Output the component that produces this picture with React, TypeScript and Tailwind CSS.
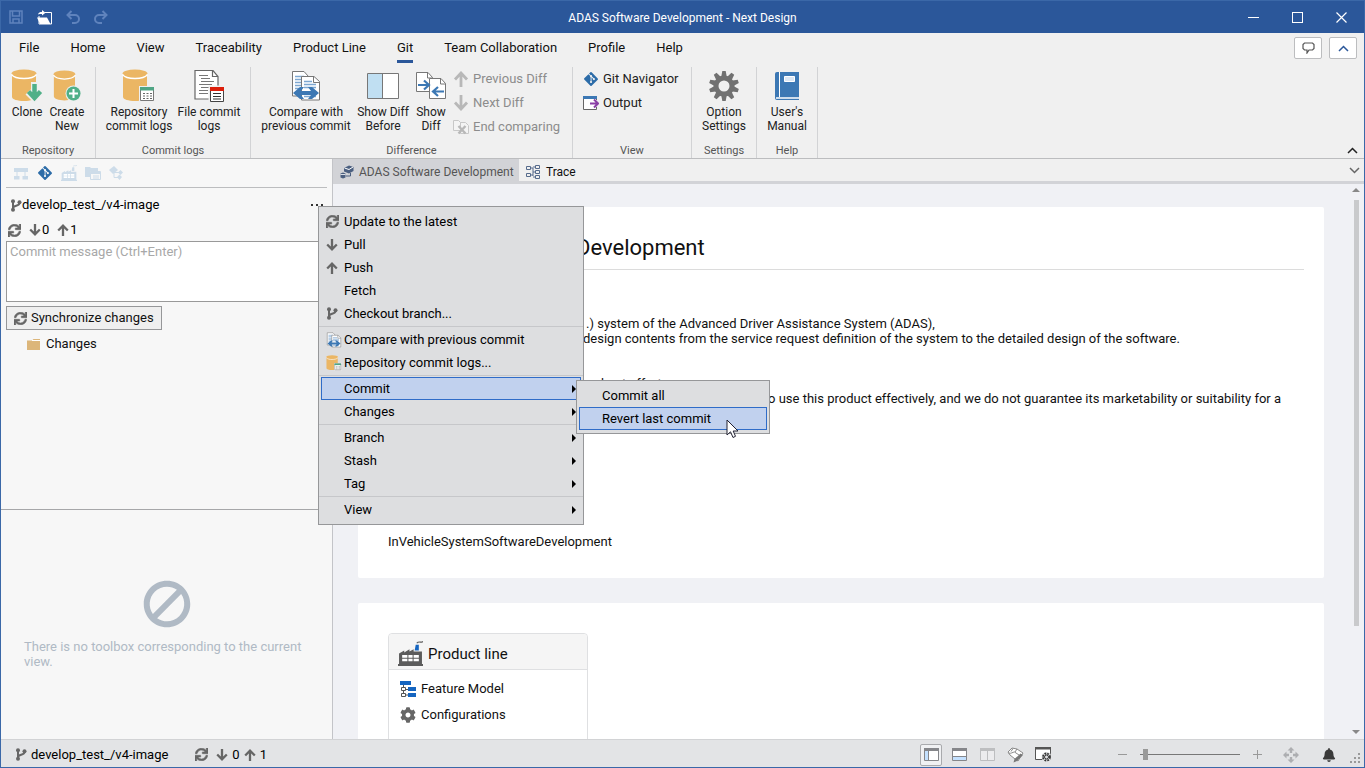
import type { ReactNode } from "react"
import { FaBan, FaBell, FaCog, FaGitAlt, FaSync } from "react-icons/fa"

/* ---------- Icons ---------- */

function DatabaseShape() {
  return (
    <>
      <path d="M1 4v24c0 2.400 5.500 4 12 4s12-1.600 12-4V4z" fill="#ebb664" />
      <ellipse cx="13" cy="4.500" rx="12.500" ry="4" fill="#ebb664" />
      <path d="M.5 5.500C3 9 9 9.500 13 9.500S23 9 25.500 5.500" fill="none" stroke="#fff" strokeWidth="1.300" />
    </>
  )
}

function CloneIcon() {
  return (
    <svg width="32" height="34" viewBox="0 0 32 34">
      <DatabaseShape />
      <path d="M23.500 13v14M17 23l6.500 6.500L30 23" fill="none" stroke="#efefef" strokeWidth="7" />
      <path d="M23.500 15v14M17.500 22.500l6 6.500 6-6.500" fill="none" stroke="#50b088" strokeWidth="4.500" />
    </svg>
  )
}

function CreateIcon() {
  return (
    <svg width="30" height="34" viewBox="0 0 30 34">
      <g transform="translate(1 1) scale(.88 .95)">
        <DatabaseShape />
      </g>
      <circle cx="21.500" cy="24.500" r="8" fill="#efefef" />
      <circle cx="21.500" cy="24.500" r="7" fill="#50b088" />
      <path d="M21.500 20v9M17 24.500h9" stroke="#fff" strokeWidth="2" />
    </svg>
  )
}

function RepoLogIcon({ size = 34 }: { size?: number }) {
  return (
    <svg width={size} height={size} viewBox="0 0 34 34">
      <DatabaseShape />
      <path d="M17 17h16v16H17z" fill="#efefef" />
      <path d="M18.500 18.500h13v13h-13z" fill="#fff" stroke="#777" />
      <path d="M18 18h14v3.500H18z" fill="#50a585" />
      <path d="M21 24.500h9M21 27h9M21 29.500h9" stroke="#666" strokeDasharray="2 1.500" />
    </svg>
  )
}

function FileLogIcon() {
  return (
    <svg width="30" height="34" viewBox="0 0 30 34">
      <path d="M1 1.500h18l5 6V30H1z" fill="#fff" stroke="#666" strokeWidth="1.200" />
      <path d="M18.500 1.500v6H24" fill="none" stroke="#666" strokeWidth="1.200" />
      <path d="M5 6.500h9M7 9.500h9M7 12.500h13M5 15.500h13M7 18.500h9M5 21.500h9M5 24.500h9" stroke="#777" />
      <path d="M14.500 16.500H30V34H14.500z" fill="#efefef" />
      <path d="M16.500 18.500h13v14h-13z" fill="#fff" stroke="#444" />
      <path d="M16 18h14v4H16z" fill="#dc1e0a" />
      <path d="M19 24.500h8M19 27.500h8M19 30h8" stroke="#333" strokeWidth="1.200" />
    </svg>
  )
}

function CompareIcon({ size = 32 }: { size?: number }) {
  return (
    <svg width={size} height={size} viewBox="0 0 32 32">
      <path d="M2.500 1.500H14l4.500 5V26h-16z" fill="#fff" stroke="#777" />
      <path d="M5 6.500h9M5 9.500h9M5 12.500h9M5 15.500h9M5 18.500h9" stroke="#7da7d1" strokeWidth="1.500" />
      <path d="M11.500 6.500H24l5.500 5V30h-18z" fill="#fff" stroke="#777" />
      <path d="M23.500 6.500v6h6" fill="none" stroke="#777" />
      <path d="M14 11.500h8M14 14.500h12M14 17.500h12M14 26.500h12" stroke="#7da7d1" strokeWidth="1.500" />
      <path d="M3 23l7-6h4l-3 4h10l-3-4h4l7 6-7 6h-4l3-4H11l3 4h-4z" fill="#3c78b4" />
    </svg>
  )
}

function SplitIcon() {
  return (
    <svg width="32" height="32" viewBox="0 0 32 32">
      <path d="M.5 3.500h31v25H.5z" fill="#fff" stroke="#777" />
      <path d="M1 4h14.500v24H1z" fill="#c0dff2" />
      <path d="M15.500 3.500v25" stroke="#777" />
    </svg>
  )
}

function ShowDiffIcon() {
  return (
    <svg width="31" height="32" viewBox="0 0 31 32">
      <path d="M.5 2.500H12l4.500 5v14H.5z" fill="#fff" stroke="#777" />
      <path d="M11.500 2.500v5.500h5" fill="none" stroke="#777" />
      <path d="M13.500 8.500H25l4.500 5v15h-16z" fill="#fff" stroke="#777" />
      <path d="M24.500 8.500V14h5" fill="none" stroke="#777" />
      <path d="M2 15h10M8 10.500l5 4.500-5 4.500M28 21.500H18M22 17l-5 4.500 5 4.500" fill="none" stroke="#3c78b4" strokeWidth="2.200" />
    </svg>
  )
}

function ThinArrow({ down = false }: { down?: boolean }) {
  return (
    <svg width="16" height="16" viewBox="0 0 16 16" className={down ? "rotate-180" : ""}>
      <path d="M8 16V3M2 8.500L8 2l6 6.500" fill="none" stroke="#b8b8b8" strokeWidth="2.800" />
    </svg>
  )
}

function EndCompareIcon() {
  return (
    <svg width="16" height="16" viewBox="0 0 16 16">
      <path d="M.5 1.500h5l2 2v8h-7zM7.500 3.500h5l3 3v8h-8z" fill="#f4f4f4" stroke="#c8c8c8" />
      <path d="M5.500 7l7 7.500M12.500 7l-7 7.500" stroke="#b8b8b8" strokeWidth="2.400" />
    </svg>
  )
}

function OutputIcon() {
  return (
    <svg width="16" height="14" viewBox="0 0 16 14">
      <path d="M.5.500h13v13H.5z" fill="#fff" stroke="#666" />
      <path d="M0 0h14v3H0z" fill="#3c78b4" />
      <path d="M13 4h2v7h-2z" fill="#efefef" />
      <path d="M7 7.500h7M11 3.500l4 4-4 4" fill="none" stroke="#8a3fa5" strokeWidth="2" />
    </svg>
  )
}

const gearTeeth = [0, 36, 72, 108, 144, 180, 216, 252, 288, 324]

function GearIcon() {
  return (
    <svg width="32" height="32" viewBox="0 0 32 32">
      {gearTeeth.map((angle) => (
        <path key={angle} d="M13 8l1.300-7h3.400L19 8z" fill="#717171" transform={`rotate(${angle} 16 16)`} />
      ))}
      <circle cx="16" cy="16" r="8" fill="none" stroke="#717171" strokeWidth="5" />
    </svg>
  )
}

function BookIcon() {
  return (
    <svg width="26" height="30" viewBox="0 0 26 30">
      <path d="M3 1h22v28H3a2 2 0 01-2-2V3a2 2 0 012-2z" fill="#3c78b4" />
      <path d="M5.500 1v25" stroke="#fff" />
      <path d="M2 27h23" stroke="#fff" strokeWidth="1.500" />
      <path d="M10.500 5.500h10v5h-10z" fill="#dde8f4" stroke="#fff" />
    </svg>
  )
}

function FactoryIcon({ size, color, accent }: { size: number; color: string; accent: string }) {
  return (
    <svg width={size} height={size} viewBox="0 0 24 24" className="shrink-0">
      <path d="M1 22V12l5-3v2l5-3v2l4-2v2h8v12h1v2H0v-2z" fill={color} />
      <path d="M4 13.500h5v2.500H4zM10 13.500h4v2.500h-4zM15 13.500h5v2.500h-5zM4 17h5v2.500H4zM10 17h4v2.500h-4zM15 17h5v2.500h-5z" fill="#fff" />
      <path d="M17 3.500h3V9h-4z" fill={accent} />
      <path d="M18 2c2-2 4 0 6-1.500" fill="none" stroke={color} />
    </svg>
  )
}

function FeatureIcon() {
  return (
    <svg width="16" height="16" viewBox="0 0 16 16">
      <path d="M0 0h11v4H0zM8 6h8v4H8zM8 12h8v4H8z" fill="#1565c0" />
      <path d="M3.500 4v10M3 8.500h5M3 14h5" fill="none" stroke="#555" />
      <path d="M1.500 6.500h4v3h-4zM1.500 12.500h4v3h-4z" fill="#fff" stroke="#555" />
    </svg>
  )
}

function FolderIcon() {
  return (
    <svg width="14" height="12" viewBox="0 0 14 12">
      <path d="M0 2.500h5L6.500 1H13v11H0z" fill="#dcb67a" />
      <path d="M5 2.500h8" stroke="#fff" />
    </svg>
  )
}

function TreeIcon() {
  return (
    <svg width="14" height="13" viewBox="0 0 14 13">
      <path d="M0 1h14v4H0zM0 9h5.500v3.500H0zM8.500 9H14v3.500H8.500z" fill="#cddce9" />
      <path d="M3 4v6M11 4v6" stroke="#cddce9" />
    </svg>
  )
}

function StackIcon() {
  return (
    <svg width="16" height="14" viewBox="0 0 16 14">
      <path d="M0 1h5l1 1h7v9H0z" fill="#cddce9" />
      <path d="M5.500 5.500h10v8h-10z" fill="#f7f7f7" stroke="#cddce9" />
      <path d="M6 6h9v2H6z" fill="#cddce9" />
      <path d="M8 10h6M8 12h6" stroke="#cddce9" />
    </svg>
  )
}

function LinkedIcon() {
  return (
    <svg width="14" height="14" viewBox="0 0 14 14">
      <path d="M0 4l5-4 4 4-5 4zM9 6.500l2.500-2.500L14 6.500 11.500 9zM8 11l2.500-2.500L13 11l-2.500 3z" fill="#cddce9" />
      <path d="M5 6v5.500h4M5 6.500h6" fill="none" stroke="#cddce9" />
    </svg>
  )
}

function ModelIcon() {
  return (
    <svg width="14" height="14" viewBox="0 0 14 14" className="shrink-0">
      <path d="M4 3l5-2.500 4.500 1.500v4L9 8.500 4 6.500z" fill="#4b5f80" />
      <path d="M4.500 3L9 4.500 13 2" fill="none" stroke="#fff" />
      <path d="M.5 8.500L3 7.500l2.500 1v4L3 13.500.5 12.500z" fill="#4b5f80" />
      <path d="M.5 9.500h5" stroke="#fff" strokeWidth=".8" />
      <path d="M6 11h4.500V8" fill="none" stroke="#4b5f80" />
    </svg>
  )
}

function TraceIcon() {
  return (
    <svg width="14" height="14" viewBox="0 0 14 14" fill="none" stroke="#566b8c" className="shrink-0">
      <path d="M.5 1.500h4v3h-4zM.5 8.500h4v3h-4zM9.500.5h4v3h-4zM9.500 5.500h4v3h-4zM9.500 10.500h4v3h-4z" />
      <path d="M4.500 3h2.500v8M4.500 10H7M7 2h2.500M7 7h2.500M7 12h2.500" />
    </svg>
  )
}

function BranchIcon({ className = "" }: { className?: string }) {
  return (
    <svg width="12" height="13" viewBox="0 0 12 13" className={`shrink-0 ${className}`}>
      <path d="M3 2v9M9.500 4c0 3.500-6 2-6.500 5" fill="none" stroke="currentColor" strokeWidth="2" />
      <circle cx="3" cy="2.300" r="2" fill="currentColor" />
      <circle cx="3" cy="10.700" r="2" fill="currentColor" />
      <circle cx="9.500" cy="3.300" r="2" fill="currentColor" />
    </svg>
  )
}

function BoldArrow({ down = false, className = "" }: { down?: boolean; className?: string }) {
  return (
    <svg width="12" height="12" viewBox="0 0 12 12" className={`shrink-0 ${className}`}>
      <path
        d={down ? "M6 0v10M1.200 5.500L6 10.300l4.800-4.800" : "M6 12V2M1.200 6.500L6 1.700l4.800 4.800"}
        fill="none"
        stroke="currentColor"
        strokeWidth="2.300"
      />
    </svg>
  )
}

function SyncIcon({ className = "" }: { className?: string }) {
  return <FaSync size={13} stroke="currentColor" strokeWidth={22} className={`shrink-0 text-[#666] ${className}`} />
}

function SaveIcon() {
  return (
    <svg width="14" height="14" viewBox="0 0 14 14" fill="none" stroke="#5f83bd" strokeWidth="1.500">
      <path d="M1 1h12v12H1zM3.500 1v5h7V1M4 13V9h6v4" />
    </svg>
  )
}

function OpenIcon() {
  return (
    <svg width="15" height="15" viewBox="0 0 15 15">
      <path d="M8 2.500h6.500v11.500h-12.500V6" fill="none" stroke="#fff" />
      <path d="M1 4.500C1.500 2.500 3 2 5 2V0l3.500 2.700L5 5.500V4C3.500 4 2 4 1 4.500z" fill="#fff" />
      <path d="M0 7.500h10l3.500 6.500H3z" fill="#fff" />
    </svg>
  )
}

function UndoIcon({ redo = false }: { redo?: boolean }) {
  return (
    <svg width="14" height="14" viewBox="0 0 14 14" className={redo ? "-scale-x-100" : ""}>
      <path d="M5.500 1L1.500 5l4 4M2 5h7a4 4 0 010 8H6" fill="none" stroke="#5f83bd" strokeWidth="2" />
    </svg>
  )
}

function PaneIcon({ kind }: { kind: "left" | "bottom" | "split" }) {
  const stroke = kind === "split" ? "#bdbec0" : "#85868a"
  return (
    <svg width="15" height="13" viewBox="0 0 15 13">
      <path d="M.5.500h14v12H.5z" fill={kind === "split" ? "#ececee" : "#fff"} stroke={stroke} />
      {kind === "left" && <path d="M1 3h3v9H1z" fill="#c4e1ff" />}
      {kind === "left" && <path d="M4.500 3v9" stroke={stroke} />}
      {kind === "bottom" && <path d="M1 9h13v3H1z" fill="#c4e1ff" />}
      {kind === "bottom" && <path d="M1 8.500h13" stroke={stroke} />}
      {kind === "split" && <path d="M7.500 3v9" stroke={stroke} />}
      <path d="M0 0h15v3H0z" fill={stroke} />
    </svg>
  )
}

function HandshakeIcon() {
  return (
    <svg width="17" height="16" viewBox="0 0 17 16">
      <path d="M1 5l4-4 5 1 6 4-5 8-3-2-5-4z" fill="#fff" stroke="#8a8a8a" />
      <path d="M1.500 6c3 1 4-1 6-1l6 4M6 1.500l-2 3M10 2l-2 3" fill="none" stroke="#8a8a8a" />
      <path d="M13.500 6.500l2.500 1.500-6 6-3.500 1.500 1-3.500z" fill="#777" />
    </svg>
  )
}

function WindowGearIcon() {
  return (
    <svg width="17" height="15" viewBox="0 0 17 15">
      <path d="M.5 1h15v11.500H.5z" fill="#fff" stroke="#555" />
      <path d="M0 0h16v2.500H0z" fill="#555" />
      <circle cx="11.500" cy="10" r="5" fill="#e3e4e6" />
      <circle cx="11.500" cy="10" r="3.500" fill="none" stroke="#333" strokeWidth="1.800" strokeDasharray="1.800 1" />
      <circle cx="11.500" cy="10" r="2" fill="none" stroke="#333" />
    </svg>
  )
}

function MoveIcon() {
  return (
    <svg width="16" height="16" viewBox="0 0 16 16" fill="#adaeb1">
      <path d="M8 0l3.500 3.500H9.200V6H6.800V3.500H4.500zM8 16l3.500-3.500H9.200V10H6.800v2.500H4.500zM0 8l3.500-3.500v2.300H6v2.400H3.500v2.300zM16 8l-3.500-3.500v2.300H10v2.400h2.500v2.300z" />
    </svg>
  )
}

function Chevron({ down = false, color = "#222" }: { down?: boolean; color?: string }) {
  return (
    <svg width="11" height="7" viewBox="0 0 11 7" className={down ? "rotate-180" : ""}>
      <path d="M1 6l4.500-4.500L10 6" fill="none" stroke={color} strokeWidth="1.500" />
    </svg>
  )
}

/* ---------- Ribbon ---------- */

const tabs = ["File", "Home", "View", "Traceability", "Product Line", "Git", "Team Collaboration", "Profile", "Help"]

function RibbonGroup({ title, width, padding, children }: {
  title: string
  width: string
  padding: string
  children: ReactNode
}) {
  return (
    <section className={`flex shrink-0 flex-col border-r border-[#d2d3d5] ${width}`}>
      <div className={`flex flex-1 ${padding}`}>{children}</div>
      <h2 className="text-center text-[11px] leading-[14px] text-[#555]">{title}</h2>
    </section>
  )
}

function RibbonButton({ icon, lines, width }: { icon: ReactNode; lines: string[]; width: string }) {
  return (
    <button className={`flex shrink-0 flex-col items-center pt-px text-[12px] leading-[14px] text-[#222] ${width}`}>
      <span className="mb-px flex h-9 items-center">{icon}</span>
      {lines.map((line) => (
        <span key={line} className="whitespace-nowrap">{line}</span>
      ))}
    </button>
  )
}

function RibbonRow({ icon, label, disabled = false }: { icon: ReactNode; label: string; disabled?: boolean }) {
  return (
    <button disabled={disabled} className="flex h-6 items-center gap-1 text-[#222] disabled:text-[#8c8c8c]">
      <span className="flex w-4 justify-center">{icon}</span>
      <span className="whitespace-nowrap">{label}</span>
    </button>
  )
}

function Ribbon() {
  return (
    <div className="flex h-24 shrink-0 items-stretch border-b border-[#bcbdbf] bg-[#f0f0f0] pt-1">
      <RibbonGroup title="Repository" width="w-[95px]" padding="pl-[7px]">
        <RibbonButton icon={<CloneIcon />} lines={["Clone"]} width="w-[38px]" />
        <RibbonButton icon={<CreateIcon />} lines={["Create", "New"]} width="w-[42px]" />
      </RibbonGroup>
      <RibbonGroup title="Commit logs" width="w-[155px]" padding="pl-[6px]">
        <RibbonButton icon={<RepoLogIcon />} lines={["Repository", "commit logs"]} width="w-[74px]" />
        <RibbonButton icon={<FileLogIcon />} lines={["File commit", "logs"]} width="w-[66px]" />
      </RibbonGroup>
      <RibbonGroup title="Difference" width="w-[322px]" padding="pl-[9px]">
        <RibbonButton icon={<CompareIcon />} lines={["Compare with", "previous commit"]} width="w-[92px]" />
        <RibbonButton icon={<SplitIcon />} lines={["Show Diff", "Before"]} width="w-[62px]" />
        <RibbonButton icon={<ShowDiffIcon />} lines={["Show", "Diff"]} width="w-[34px]" />
        <div className="flex flex-col pl-[5px]">
          <RibbonRow disabled icon={<ThinArrow />} label="Previous Diff" />
          <RibbonRow disabled icon={<ThinArrow down />} label="Next Diff" />
          <RibbonRow disabled icon={<EndCompareIcon />} label="End comparing" />
        </div>
      </RibbonGroup>
      <RibbonGroup title="View" width="w-[119px]" padding="pl-[10px]">
        <div className="flex flex-col">
          <RibbonRow icon={<FaGitAlt size={16} color="#2c6ca8" />} label="Git Navigator" />
          <RibbonRow icon={<OutputIcon />} label="Output" />
        </div>
      </RibbonGroup>
      <RibbonGroup title="Settings" width="w-[65px]" padding="pl-[6px]">
        <RibbonButton icon={<GearIcon />} lines={["Option", "Settings"]} width="w-[52px]" />
      </RibbonGroup>
      <RibbonGroup title="Help" width="w-[61px]" padding="pl-[5px]">
        <RibbonButton icon={<BookIcon />} lines={["User's", "Manual"]} width="w-[50px]" />
      </RibbonGroup>
      <button aria-label="Collapse ribbon" className="ml-auto self-end pr-[6px] pb-1">
        <Chevron />
      </button>
    </div>
  )
}

/* ---------- Context menu ---------- */

function MenuItem({ label, icon, arrow = false, active = false, children }: {
  label: string
  icon?: ReactNode
  arrow?: boolean
  active?: boolean
  children?: ReactNode
}) {
  return (
    <li className="relative">
      <button
        className={`flex h-[23px] w-full items-center border pr-1 text-left ${
          active ? "border-[#2f6cc8] bg-[#c1d1ee]" : "border-transparent"
        }`}
      >
        <span className="flex w-[22px] items-center pl-1 text-[#666]">{icon}</span>
        <span className="flex-1 whitespace-nowrap">{label}</span>
        {arrow && (
          <svg width="4" height="8" viewBox="0 0 4 8">
            <path d="M0 0l4 4-4 4z" fill="#000" />
          </svg>
        )}
      </button>
      {children}
    </li>
  )
}

function MenuSeparator() {
  return <li role="separator" className="-mx-0.5 my-px h-px bg-[#c6c7ca]" />
}

function ContextMenu() {
  return (
    <ul className="absolute top-[205px] left-[317px] z-10 w-[266px] border border-[#969799] bg-[#dddee0] px-0.5 py-[3px] text-black">
      <MenuItem icon={<SyncIcon />} label="Update to the latest" />
      <MenuItem icon={<BoldArrow down />} label="Pull" />
      <MenuItem icon={<BoldArrow />} label="Push" />
      <MenuItem label="Fetch" />
      <MenuItem icon={<BranchIcon />} label="Checkout branch..." />
      <MenuSeparator />
      <MenuItem icon={<CompareIcon size={16} />} label="Compare with previous commit" />
      <MenuItem icon={<RepoLogIcon size={16} />} label="Repository commit logs..." />
      <MenuSeparator />
      <MenuItem label="Commit" arrow active>
        <ul className="absolute top-[3px] left-[255px] z-20 w-[194px] border border-[#969799] bg-[#dddee0] px-0.5 py-[3px]">
          <MenuItem label="Commit all" />
          <MenuItem label="Revert last commit" active>
            {/* Mouse pointer */}
            <svg width="13" height="20" viewBox="0 0 13 20" className="absolute top-3 left-[147px]">
              <path d="M1 1v15l3.500-3.200L7 18.500l2.500-1.200L7.200 12H12z" fill="#fff" stroke="#223" />
            </svg>
          </MenuItem>
        </ul>
      </MenuItem>
      <MenuItem label="Changes" arrow />
      <MenuSeparator />
      <MenuItem label="Branch" arrow />
      <MenuItem label="Stash" arrow />
      <MenuItem label="Tag" arrow />
      <MenuSeparator />
      <MenuItem label="View" arrow />
    </ul>
  )
}

/* ---------- Git panel ---------- */

function GitPanel() {
  return (
    <aside className="flex w-[332px] shrink-0 flex-col border-r border-[#c3c4c8] bg-[#f7f7f7]">
      <div className="flex min-h-0 flex-1 flex-col px-[5px]">
        <div className="flex h-[29px] shrink-0 items-center gap-2 border-b border-[#bcbdbf] pl-[7px]">
          <button aria-label="Model" className="flex w-4 justify-center"><TreeIcon /></button>
          <button aria-label="Git" className="flex w-4"><FaGitAlt size={16} color="#2c6ca8" /></button>
          <button aria-label="Product line" className="flex w-4"><FactoryIcon size={16} color="#cddce9" accent="#cddce9" /></button>
          <button aria-label="Files" className="flex w-4"><StackIcon /></button>
          <button aria-label="Relations" className="flex w-4"><LinkedIcon /></button>
        </div>
        <div className="flex h-8 items-center pt-[2px] pl-1 text-[#666]">
          <BranchIcon />
          <span className="text-black">develop_test_/v4-image</span>
          <button aria-label="More" className="mr-1 ml-auto flex gap-[3px]">
            <span className="size-[2px] bg-[#333]" />
            <span className="size-[2px] bg-[#333]" />
            <span className="size-[2px] bg-[#333]" />
          </button>
        </div>
        <div className="flex h-5 items-center pl-[2px] text-[#666]">
          <button aria-label="Refresh"><SyncIcon /></button>
          <BoldArrow down className="ml-2" />
          <span className="ml-px text-black">0</span>
          <BoldArrow className="ml-2" />
          <span className="ml-px text-black">1</span>
        </div>
        <textarea
          aria-label="Commit message"
          placeholder="Commit message (Ctrl+Enter)"
          className="mt-px block h-[61px] shrink-0 resize-none border border-[#999] bg-white px-[3px] py-[2px] leading-4 placeholder:text-[#a8a8a8]"
        />
        <button className="mt-1 flex h-6 w-[156px] items-center gap-1 border border-[#969799] bg-[#efefef] px-[7px]">
          <SyncIcon />
          <span className="whitespace-nowrap">Synchronize changes</span>
        </button>
        <div className="flex h-7 items-center gap-[5px] pl-[21px]">
          <FolderIcon />
          <span>Changes</span>
        </div>
      </div>
      <div className="flex h-[230px] shrink-0 flex-col border-t border-[#a6a7a9] px-[23px] pt-[70px] text-[#b0bac5]">
        <FaBan size={48} className="mb-[11px] -scale-x-100 self-center" />
        <p className="leading-[15px]">There is no toolbox corresponding to the current view.</p>
      </div>
    </aside>
  )
}

/* ---------- Document ---------- */

function Document() {
  return (
    <main className="flex min-w-0 flex-1 flex-col bg-[#f0f1f5]">
      <div className="flex h-[25px] shrink-0 border-b-3 border-[#d2d3d7] bg-[#f0f0f0] text-[12px]">
        <button className="flex w-[186px] items-center gap-[5px] bg-[#d2d3d7] pt-[3px] pl-[7px] text-[#555]">
          <ModelIcon />
          <span className="whitespace-nowrap">ADAS Software Development</span>
        </button>
        <button className="flex items-center gap-[6px] pt-[3px] pl-[7px]">
          <TraceIcon />
          <span>Trace</span>
        </button>
        <button aria-label="Tab list" className="ml-auto pr-[4px]"><Chevron down color="#666" /></button>
      </div>
      <div className="flex min-h-0 flex-1">
        <div className="min-w-0 flex-1 overflow-hidden pt-[23px] pr-6 pl-[25px]">
          <article className="h-[371px] rounded-xs bg-white pr-5 pl-[30px]">
            <h1 className="flex h-[63px] items-center border-b border-[#dcdcdc] pt-5 text-[22px]">
              <span className="w-[188px]">ADAS Software</span>
              <span>Development</span>
            </h1>
            <div className="pt-[46px] leading-[15px] whitespace-nowrap">
              <p className="pl-[198px]">.) system of the Advanced Driver Assistance System (ADAS),</p>
              <p className="pl-[195px]">
                design contents from the service request definition of the system to the detailed design of the software.
              </p>
              <p className="pt-[30px] pl-[213px]">best efforts</p>
              <p className="pl-[380px]">
                o use this product effectively, and we do not guarantee its marketability or suitability for a
              </p>
              <p className="pt-[128px]">InVehicleSystemSoftwareDevelopment</p>
            </div>
          </article>
          <article className="mt-[25px] h-[400px] rounded-xs bg-white px-[30px] pt-[30px]">
            <section className="h-[200px] w-[200px] rounded-sm border border-[#dfe0e2]">
              <h2 className="flex h-9 items-center gap-[5px] rounded-t-sm border-b border-[#dfe0e2] bg-[#f5f5f5] px-[9px] pt-1 text-[15px]">
                <FactoryIcon size={25} color="#5c5c5c" accent="#1565c0" />
                Product line
              </h2>
              <ul className="pt-[6px] pl-[11px]">
                <li className="flex h-[26px] items-center gap-[5px]"><FeatureIcon /><a href="#feature">Feature Model</a></li>
                <li className="flex h-[26px] items-center gap-[5px]"><FaCog size={16} color="#666" /><a href="#config">Configurations</a></li>
              </ul>
            </section>
          </article>
        </div>
        {/* Scroll bar */}
        <div className="flex w-4 shrink-0 flex-col items-center pt-[4px] pb-[5px]">
          <svg width="8" height="4" viewBox="0 0 8 4"><path d="M0 4l4-4 4 4z" fill="#888" /></svg>
          <span className="mt-2 h-[426px] w-[5px] bg-[#c9cacc]" />
          <svg width="8" height="4" viewBox="0 0 8 4" className="mt-auto"><path d="M0 0l4 4 4-4z" fill="#888" /></svg>
        </div>
      </div>
    </main>
  )
}

/* ---------- Status bar ---------- */

function StatusBar() {
  return (
    <footer className="flex h-7 shrink-0 items-center border-t border-[#d2d3d5] bg-[#e3e4e6] pt-[2px] pl-[14px] text-[#666]">
      <BranchIcon />
      <span className="ml-1 text-black">develop_test_/v4-image</span>
      <SyncIcon className="ml-[27px]" />
      <BoldArrow down className="ml-2" />
      <span className="ml-1 text-black">0</span>
      <BoldArrow className="ml-1" />
      <span className="ml-1 text-black">1</span>
      <div className="ml-auto flex items-center gap-[6px]">
        <button aria-label="Left pane" className="flex h-[22px] w-[22px] items-center justify-center rounded-xs border border-[#a9aaad] bg-[#f0f1f3]">
          <PaneIcon kind="left" />
        </button>
        <button aria-label="Bottom pane" className="flex w-[22px] justify-center"><PaneIcon kind="bottom" /></button>
        <button aria-label="Split pane" className="flex w-[22px] justify-center"><PaneIcon kind="split" /></button>
        <button aria-label="Review" className="flex w-[22px] justify-center"><HandshakeIcon /></button>
        <button aria-label="Window settings" className="flex w-[22px] justify-center"><WindowGearIcon /></button>
      </div>
      <button aria-label="Zoom out" className="ml-[64px] flex h-3 w-[9px] items-center">
        <span className="h-px w-full bg-[#999]" />
      </button>
      <input
        type="range"
        aria-label="Zoom"
        defaultValue={3}
        className="mx-[13px] h-3 w-[100px] appearance-none bg-transparent [&::-webkit-slider-runnable-track]:h-px [&::-webkit-slider-runnable-track]:bg-[#777] [&::-webkit-slider-thumb]:-mt-[5px] [&::-webkit-slider-thumb]:h-[11px] [&::-webkit-slider-thumb]:w-[5px] [&::-webkit-slider-thumb]:appearance-none [&::-webkit-slider-thumb]:bg-[#999]"
      />
      <button aria-label="Zoom in">
        <svg width="9" height="9" viewBox="0 0 9 9"><path d="M0 4.500h9M4.500 0v9" stroke="#999" /></svg>
      </button>
      <button aria-label="Fit" className="ml-[21px]"><MoveIcon /></button>
      <button aria-label="Notifications" className="ml-[23px]"><FaBell size={14} color="#3a3a3a" /></button>
      <svg width="11" height="11" viewBox="0 0 11 11" className="mr-[3px] mb-[3px] ml-[14px] self-end" fill="#999">
        <path d="M8 0h2v2H8zM4 4h2v2H4zM8 4h2v2H8zM0 8h2v2H0zM4 8h2v2H4zM8 8h2v2H8z" />
      </svg>
    </footer>
  )
}

export default function App() {
  return (
    <div className="relative flex h-screen flex-col overflow-hidden border border-[#3b68a8] bg-[#f0f0f0] font-[Roboto,'Noto_Sans',sans-serif] text-[13px] leading-4 text-[#111]">
      {/* Title bar */}
      <header className="grid h-8 shrink-0 grid-cols-[1fr_auto_1fr] items-center bg-[#2b579a] text-[12px] text-white">
        <div className="flex items-center gap-[14px] pl-2">
          <button aria-label="Save"><SaveIcon /></button>
          <button aria-label="Open"><OpenIcon /></button>
          <button aria-label="Undo"><UndoIcon /></button>
          <button aria-label="Redo"><UndoIcon redo /></button>
        </div>
        <span className="pt-px">ADAS Software Development - Next Design</span>
        <div className="flex items-center justify-end gap-[33px] pr-[17px]">
          <button aria-label="Minimize" className="flex h-3 w-[11px] items-center"><span className="h-px w-full bg-white" /></button>
          <button aria-label="Maximize" className="size-[11px] border border-white" />
          <button aria-label="Close">
            <svg width="11" height="11" viewBox="0 0 11 11"><path d="M.5.500l10 10M10.500.5l-10 10" stroke="#fff" strokeWidth="1.200" /></svg>
          </button>
        </div>
      </header>

      {/* Tabs */}
      <nav className="flex h-[30px] shrink-0 items-stretch gap-[31px] bg-[#f0f0f0] pl-[18px]">
        {tabs.map((tab) => (
          <button key={tab} className={`border-b-3 pt-[2px] whitespace-nowrap ${tab === "Git" ? "border-[#2b579a]" : "border-transparent"}`}>
            {tab}
          </button>
        ))}
        <div className="ml-auto flex items-center gap-[7px] pr-[7px]">
          <button aria-label="Feedback" className="flex h-[22px] w-7 items-center justify-center rounded-xs border border-[#bcbdbf] bg-white">
            <svg width="13" height="12" viewBox="0 0 13 12">
              <path d="M2.500 1h8L12 2.500v4L10.500 8H7l-2 3V8H2.500L1 6.500v-4z" fill="none" stroke="#555" strokeWidth="1.200" />
            </svg>
          </button>
          <button aria-label="Hide tabs" className="flex h-[22px] w-7 items-center justify-center rounded-xs border border-[#bcbdbf] bg-white">
            <Chevron color="#2b579a" />
          </button>
        </div>
      </nav>

      <Ribbon />

      <div className="flex min-h-0 flex-1">
        <GitPanel />
        <Document />
      </div>

      <StatusBar />
      <ContextMenu />
    </div>
  )
}
